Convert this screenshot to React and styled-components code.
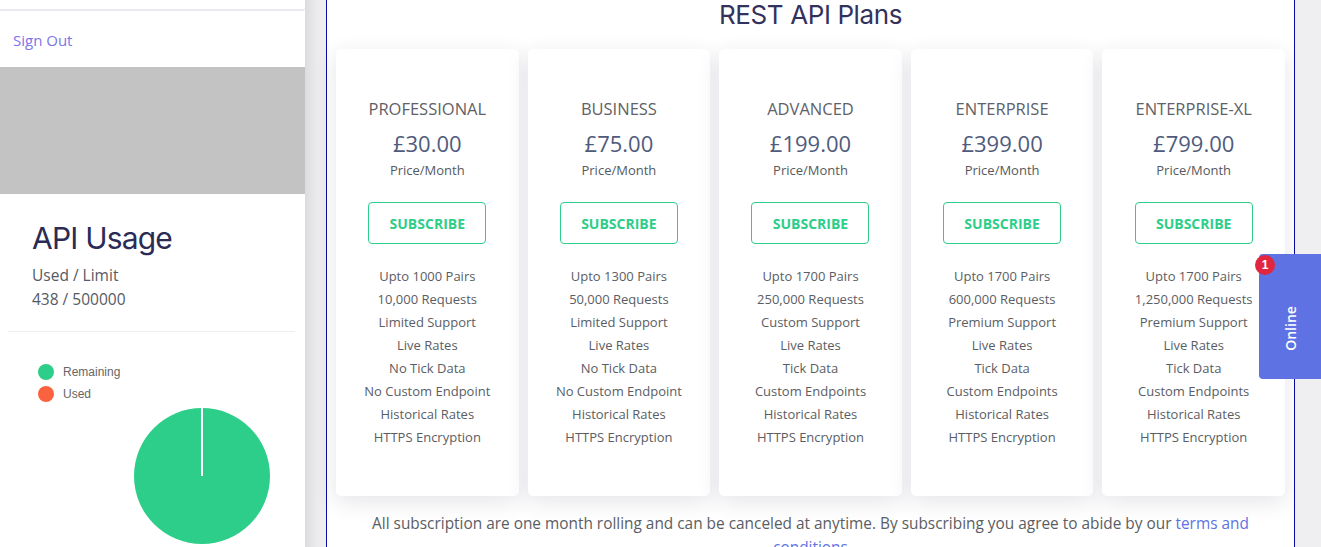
import React from "react";
import styled, { createGlobalStyle } from "styled-components";

const GlobalStyle = createGlobalStyle`
  html, body {
    margin: 0;
    padding: 0;
    overflow: hidden;
    background: #efeff1;
    font-family: "Open Sans", "Noto Sans", sans-serif;
  }
`;

const plans = [
  {
    name: "PROFESSIONAL",
    price: "£30.00",
    features: ["Upto 1000 Pairs", "10,000 Requests", "Limited Support", "Live Rates", "No Tick Data", "No Custom Endpoint", "Historical Rates", "HTTPS Encryption"],
  },
  {
    name: "BUSINESS",
    price: "£75.00",
    features: ["Upto 1300 Pairs", "50,000 Requests", "Limited Support", "Live Rates", "No Tick Data", "No Custom Endpoint", "Historical Rates", "HTTPS Encryption"],
  },
  {
    name: "ADVANCED",
    price: "£199.00",
    features: ["Upto 1700 Pairs", "250,000 Requests", "Custom Support", "Live Rates", "Tick Data", "Custom Endpoints", "Historical Rates", "HTTPS Encryption"],
  },
  {
    name: "ENTERPRISE",
    price: "£399.00",
    features: ["Upto 1700 Pairs", "600,000 Requests", "Premium Support", "Live Rates", "Tick Data", "Custom Endpoints", "Historical Rates", "HTTPS Encryption"],
  },
  {
    name: "ENTERPRISE-XL",
    price: "£799.00",
    features: ["Upto 1700 Pairs", "1,250,000 Requests", "Premium Support", "Live Rates", "Tick Data", "Custom Endpoints", "Historical Rates", "HTTPS Encryption"],
  },
];

const Page = styled.div`
  display: flex;
  height: 547px;
  overflow: hidden;
  background: #efeff1;
`;

const Sidebar = styled.aside`
  width: 305px;
  flex: 0 0 305px;
  display: flex;
  flex-direction: column;
  background: #fff;
`;

const TopStub = styled.div`
  flex: 0 0 auto;
  height: 9px;
  background: #fff;
  border-bottom: 2px solid #e9eaee;
  border-bottom-right-radius: 3px;
`;

const SignOutCard = styled.div`
  flex: 0 0 56px;
  display: flex;
  align-items: center;
  padding-left: 13px;
  background: #fff;
`;

const SignOut = styled.a`
  color: #7d74ea;
  font-size: 15px;
  text-decoration: none;
  margin-top: 1px;
`;

const GreyBlock = styled.div`
  flex: 0 0 127px;
  background: #c3c3c3;
`;

const UsageCard = styled.div`
  flex: 1;
  background: #fff;
  border-top-right-radius: 4px;
  padding: 24px 10px 0 8px;
`;

const UsageHead = styled.div`
  padding: 0 0 20px 24px;
  border-bottom: 1px solid #eceef1;
`;

const UsageTitle = styled.h2`
  margin: 0 0 5px;
  font-family: "Inter", "Lato", sans-serif;
  font-weight: 400;
  font-size: 30px;
  letter-spacing: -0.8px;
  line-height: 40px;
  color: #2b2b55;
`;

const UsageText = styled.div`
  font-size: 15.5px;
  line-height: 24px;
  color: #555a64;
`;

const Legend = styled.div`
  display: flex;
  flex-direction: column;
  gap: 6px;
  padding: 32px 0 0 30px;
`;

const LegendItem = styled.div`
  display: flex;
  align-items: center;
  gap: 9px;
  font-family: "Liberation Sans", Arial, sans-serif;
  font-size: 12px;
  color: #666;
`;

const Dot = styled.span`
  width: 16px;
  height: 16px;
  border-radius: 50%;
  background: ${(p) => p.color};
`;

const PieWrap = styled.div`
  display: flex;
  padding: 5px 0 0 125px;
`;

const Gutter = styled.div`
  width: 21px;
  flex: 0 0 21px;
  background: linear-gradient(to right, #dcdce0, #ececef 60%, #eeeef1);
`;

const Main = styled.main`
  width: 969px;
  flex: 0 0 969px;
  box-sizing: border-box;
  background: #fff;
  border-left: 1px solid #0a0aa0;
  border-right: 1px solid #0a0aa0;
  padding: 0 9px;
  display: flex;
  flex-direction: column;
  align-items: center;
`;

const Title = styled.h1`
  margin: -1px 0 0;
  font-family: "Inter", "Lato", sans-serif;
  font-weight: 400;
  font-size: 26px;
  letter-spacing: -0.4px;
  line-height: 32px;
  color: #32325d;
`;

const Cards = styled.div`
  align-self: stretch;
  margin-top: 18px;
  display: grid;
  grid-template-columns: repeat(5, 1fr);
  gap: 9px;
`;

const Card = styled.div`
  height: 447px;
  background: #fff;
  border-radius: 5px;
  box-shadow: 0 6px 22px rgba(40, 40, 70, 0.12);
  display: flex;
  flex-direction: column;
  align-items: center;
  padding-top: 49px;
  box-sizing: border-box;
`;

const PlanName = styled.div`
  font-size: 16.5px;
  line-height: 22px;
  color: #5f6168;
`;

const Price = styled.div`
  margin-top: 9px;
  font-size: 22px;
  line-height: 28px;
  color: #4f5b7c;
`;

const Per = styled.div`
  margin-top: 3px;
  font-size: 13px;
  line-height: 20px;
  color: #555a60;
`;

const SubscribeButton = styled.button`
  margin-top: 22px;
  width: 118px;
  height: 42px;
  background: #fff;
  border: 1px solid #2dce89;
  border-radius: 4px;
  color: #2dce89;
  font-family: "Open Sans", sans-serif;
  font-weight: 700;
  font-size: 14px;
  cursor: pointer;
`;

const Features = styled.ul`
  list-style: none;
  margin: 21px 0 0;
  padding: 0;
  text-align: center;
`;

const Feature = styled.li`
  font-size: 13px;
  line-height: 23px;
  color: #5a5d63;
  white-space: nowrap;
`;

const Note = styled.p`
  margin: 16px 0 0;
  max-width: 900px;
  text-align: center;
  font-size: 15.4px;
  line-height: 24px;
  color: #5a5d63;
  a {
    color: #5e72e4;
    text-decoration: none;
  }
`;

const Rest = styled.div`
  flex: 1;
  background: #efeff1;
`;

const OnlineTab = styled.div`
  position: fixed;
  top: 254px;
  right: 0;
  width: 62px;
  height: 125px;
  background: #5e72e4;
  border-radius: 4px 0 0 4px;
  display: flex;
  align-items: center;
  justify-content: center;
`;

const OnlineLabel = styled.span`
  transform: rotate(-90deg);
  color: #fff;
  font-family: "Open Sans", sans-serif;
  font-weight: 600;
  font-size: 14px;
  margin-top: 24px;
`;

const Badge = styled.span`
  position: absolute;
  top: 1px;
  left: -4px;
  width: 20px;
  height: 20px;
  border-radius: 50%;
  background: #e3263f;
  color: #fff;
  font-family: "Liberation Sans", Arial, sans-serif;
  font-weight: 700;
  font-size: 12px;
  display: flex;
  align-items: center;
  justify-content: center;
`;

const Pie = () => (
  <svg width="138" height="138" viewBox="0 0 138 138">
    <circle cx="69" cy="69" r="68" fill="#2dce89" />
    <line x1="69" y1="0" x2="69" y2="69" stroke="#fff" strokeWidth="2" />
  </svg>
);

const App = () => (
  <>
    <GlobalStyle />
    <Page>
      <Sidebar>
        <TopStub />
        <SignOutCard>
          <SignOut href="#">Sign Out</SignOut>
        </SignOutCard>
        <GreyBlock />
        <UsageCard>
          <UsageHead>
            <UsageTitle>API Usage</UsageTitle>
            <UsageText>Used / Limit</UsageText>
            <UsageText>438 / 500000</UsageText>
          </UsageHead>
          <Legend>
            <LegendItem>
              <Dot color="#2dce89" />
              Remaining
            </LegendItem>
            <LegendItem>
              <Dot color="#fb6340" />
              Used
            </LegendItem>
          </Legend>
          <PieWrap>
            <Pie />
          </PieWrap>
        </UsageCard>
      </Sidebar>
      <Gutter />
      <Main>
        <Title>REST API Plans</Title>
        <Cards>
          {plans.map((plan) => (
            <Card key={plan.name}>
              <PlanName>{plan.name}</PlanName>
              <Price>{plan.price}</Price>
              <Per>Price/Month</Per>
              <SubscribeButton>SUBSCRIBE</SubscribeButton>
              <Features>
                {plan.features.map((f) => (
                  <Feature key={f}>{f}</Feature>
                ))}
              </Features>
            </Card>
          ))}
        </Cards>
        <Note>
          All subscription are one month rolling and can be canceled at anytime. By subscribing you agree to abide by our{" "}
          <a href="#">terms and conditions</a>
        </Note>
      </Main>
      <Rest />
    </Page>
    <OnlineTab>
      <Badge>1</Badge>
      <OnlineLabel>Online</OnlineLabel>
    </OnlineTab>
  </>
);

export default App;
